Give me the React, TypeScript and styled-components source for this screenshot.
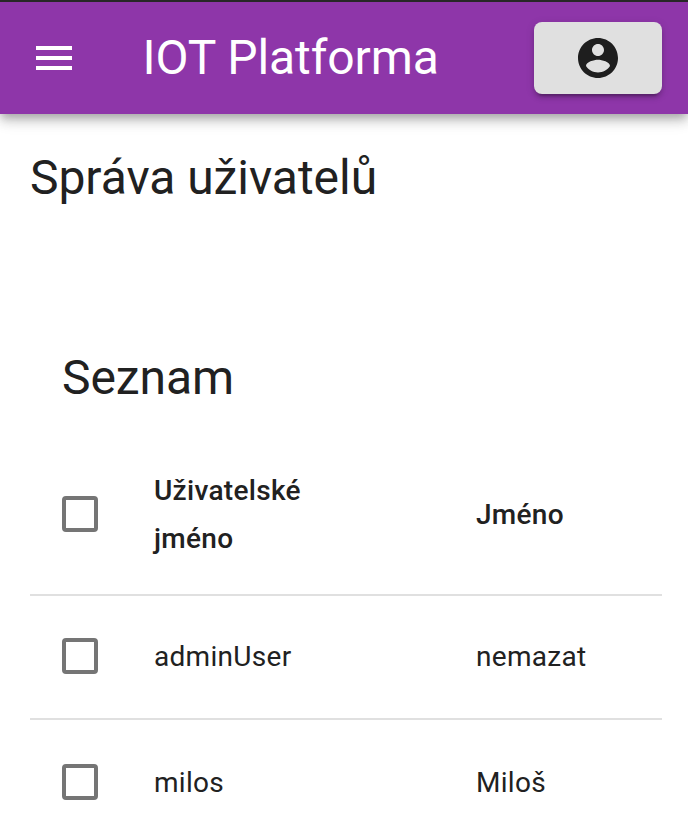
import React from 'react';
import styled, { createGlobalStyle } from 'styled-components';

const GlobalStyle = createGlobalStyle`
  * { box-sizing: border-box; }
  html, body { margin: 0; overflow: hidden; background: #fff; }
  body { font-family: Roboto, sans-serif; color: #212121; }
`;

const Page = styled.div`
  width: 688px;
  height: 840px;
  overflow: hidden;
`;

const AppBar = styled.header`
  height: 114px;
  border-top: 2px solid #272727;
  background: #8e36a9;
  color: #fff;
  display: flex;
  align-items: center;
  padding: 0 26px 0 30px;
  box-shadow: 0 4px 8px -2px rgba(0, 0, 0, 0.2), 0 8px 10px rgba(0, 0, 0, 0.14), 0 2px 20px rgba(0, 0, 0, 0.12);
`;

const MenuButton = styled.button`
  width: 48px;
  height: 48px;
  padding: 0;
  border: 0;
  background: none;
  color: inherit;
  svg { display: block; width: 48px; height: 48px; }
`;

const Brand = styled.div`
  flex: 1;
  margin-left: 64.5px;
  font-size: 48px;
  line-height: 64px;
  letter-spacing: -0.08px;
  white-space: nowrap;
`;

const AccountButton = styled.button`
  width: 128px;
  height: 72px;
  padding: 0;
  border: 0;
  border-radius: 8px;
  background: #e0e0e0;
  color: #1e1e1e;
  display: flex;
  align-items: center;
  justify-content: center;
  box-shadow: 0 6px 2px -4px rgba(0, 0, 0, 0.2), 0 4px 4px rgba(0, 0, 0, 0.14), 0 2px 10px rgba(0, 0, 0, 0.12);
  svg { width: 48px; height: 48px; }
`;

const PageTitle = styled.h1`
  margin: 32px 0 0 30px;
  font-size: 48px;
  font-weight: 400;
  line-height: 64px;
  letter-spacing: -0.04px;
`;

const Card = styled.section`
  margin: 136px 26px 0 30px;
`;

const CardTitle = styled.h2`
  margin: 0;
  padding-left: 32px;
  height: 86px;
  font-size: 48px;
  font-weight: 400;
  line-height: 64px;
  letter-spacing: -0.08px;
`;

const Row = styled.div<{ $height: number; $head?: boolean }>`
  height: ${p => p.$height}px;
  display: grid;
  grid-template-columns: 124px 322px 1fr;
  align-items: center;
  padding-top: ${p => (p.$head ? 4 : 0)}px;
  border-bottom: 2px solid #e0e0e0;
  font-size: 28px;
  font-weight: ${p => (p.$head ? 500 : 400)};
  line-height: ${p => (p.$head ? 48 : 40)}px;
  letter-spacing: 0.3px;
`;

const NameCell = styled.div`
  max-width: 200px;
`;

const Checkbox = styled.span`
  width: 36px;
  height: 36px;
  margin: 0 0 2px 32px;
  border: 4px solid #757575;
  border-radius: 4px;
`;

const users = [
  { login: 'adminUser', name: 'nemazat', height: 124 },
  { login: 'milos', name: 'Miloš', height: 128 },
];

export default function App() {
  return (
    <Page>
      <GlobalStyle />
      <AppBar>
        <MenuButton aria-label="Menu">
          <svg viewBox="0 0 24 24" fill="currentColor"><path d="M3 18h18v-2H3v2zm0-5h18v-2H3v2zm0-7v2h18V6H3z" /></svg>
        </MenuButton>
        <Brand>IOT Platforma</Brand>
        <AccountButton aria-label="Account">
          <svg viewBox="0 0 24 24" fill="currentColor"><path d="M12 2C6.48 2 2 6.48 2 12s4.48 10 10 10 10-4.48 10-10S17.52 2 12 2zm0 3c1.66 0 3 1.34 3 3s-1.34 3-3 3-3-1.34-3-3 1.34-3 3-3zm0 14.2c-2.5 0-4.71-1.28-6-3.22.03-1.99 4-3.08 6-3.08 1.99 0 5.97 1.09 6 3.08-1.29 1.94-3.5 3.22-6 3.22z" /></svg>
        </AccountButton>
      </AppBar>
      <PageTitle>Správa uživatelů</PageTitle>
      <Card>
        <CardTitle>Seznam</CardTitle>
        <Row $height={164} $head>
          <Checkbox />
          <NameCell>Uživatelské jméno</NameCell>
          <div>Jméno</div>
        </Row>
        {users.map(user => (
          <Row key={user.login} $height={user.height}>
            <Checkbox />
            <NameCell>{user.login}</NameCell>
            <div>{user.name}</div>
          </Row>
        ))}
      </Card>
    </Page>
  );
}
